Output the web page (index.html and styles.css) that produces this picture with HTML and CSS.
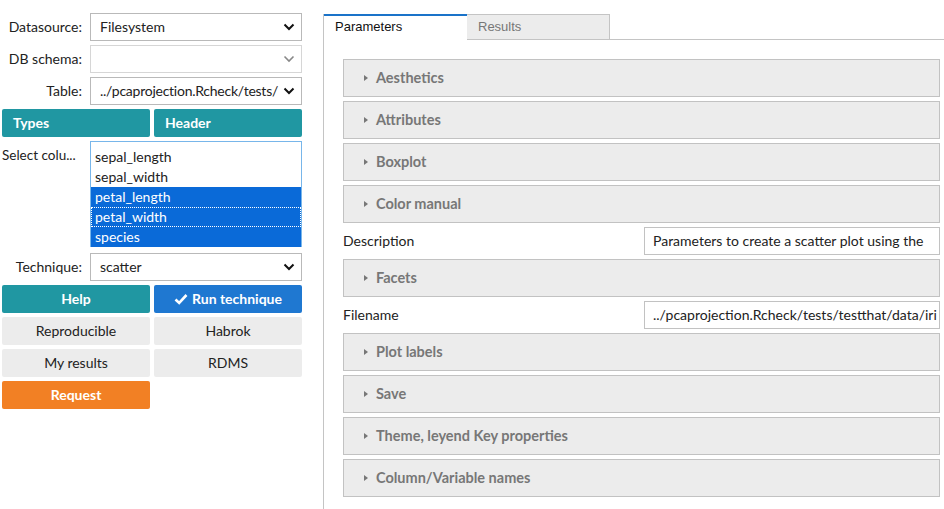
FILE: index.html
```html
<!DOCTYPE html>
<html>
<head>
<meta charset="utf-8">
<link rel="stylesheet" href="styles.css">
</head>
<body>
<div class="app">
  <div class="left">
    <div class="row">
      <label class="lbl">Datasource:</label>
      <div class="sel"><span class="val">Filesystem</span><svg class="chev" viewBox="0 0 12 8" width="12" height="8"><path d="M1.5 1.5 L6 6 L10.5 1.5" fill="none" stroke="#111" stroke-width="2"/></svg></div>
    </div>
    <div class="row">
      <label class="lbl">DB schema:</label>
      <div class="sel dis"><span class="val"></span><svg class="chev" viewBox="0 0 12 8" width="12" height="8"><path d="M1.5 1.5 L6 6 L10.5 1.5" fill="none" stroke="#888" stroke-width="1.6"/></svg></div>
    </div>
    <div class="row">
      <label class="lbl">Table:</label>
      <div class="sel"><span class="val tight">../pcaprojection.Rcheck/tests/</span><svg class="chev" viewBox="0 0 12 8" width="12" height="8"><path d="M1.5 1.5 L6 6 L10.5 1.5" fill="none" stroke="#111" stroke-width="2"/></svg></div>
    </div>
    <div class="btns">
      <div class="btn teal left-al">Types</div>
      <div class="btn teal left-al">Header</div>
    </div>
    <div class="row multi">
      <label class="lbl lbl-left">Select colu...</label>
      <div class="list">
        <div class="opt">sepal_length</div>
        <div class="opt">sepal_width</div>
        <div class="opt on">petal_length</div>
        <div class="opt on focus">petal_width</div>
        <div class="opt on">species</div>
      </div>
    </div>
    <div class="row tech">
      <label class="lbl">Technique:</label>
      <div class="sel"><span class="val">scatter</span><svg class="chev" viewBox="0 0 12 8" width="12" height="8"><path d="M1.5 1.5 L6 6 L10.5 1.5" fill="none" stroke="#111" stroke-width="2"/></svg></div>
    </div>
    <div class="btns">
      <div class="btn teal">Help</div>
      <div class="btn blue"><svg class="check" viewBox="0 0 14 12" width="14" height="12"><path d="M1.5 6.5 L5.2 10 L12.5 2" fill="none" stroke="#fff" stroke-width="2.6"/></svg>Run technique</div>
    </div>
    <div class="btns">
      <div class="btn gray">Reproducible</div>
      <div class="btn gray">Habrok</div>
    </div>
    <div class="btns">
      <div class="btn gray">My results</div>
      <div class="btn gray">RDMS</div>
    </div>
    <div class="btns">
      <div class="btn orange">Request</div>
    </div>
  </div>
  <div class="right">
    <div class="tabs">
      <div class="tab active">Parameters</div>
      <div class="tab">Results</div>
      <div class="tab-fill"></div>
    </div>
    <div class="content">
      <div class="panel"><span class="tri"></span>Aesthetics</div>
      <div class="panel"><span class="tri"></span>Attributes</div>
      <div class="panel"><span class="tri"></span>Boxplot</div>
      <div class="panel"><span class="tri"></span>Color manual</div>
      <div class="field">
        <span class="flabel">Description</span>
        <div class="input">Parameters to create a scatter plot using the</div>
      </div>
      <div class="panel"><span class="tri"></span>Facets</div>
      <div class="field">
        <span class="flabel">Filename</span>
        <div class="input">../pcaprojection.Rcheck/tests/testthat/data/iri</div>
      </div>
      <div class="panel"><span class="tri"></span>Plot labels</div>
      <div class="panel"><span class="tri"></span>Save</div>
      <div class="panel"><span class="tri"></span>Theme, leyend Key properties</div>
      <div class="panel"><span class="tri"></span>Column/Variable names</div>
    </div>
  </div>
</div>
</body>
</html>
```
FILE: styles.css
```css
* { box-sizing: border-box; }
html, body { margin: 0; padding: 0; background: #fff; }
body {
  font-family: "Lato", "Open Sans", sans-serif;
  font-size: 14px;
  color: #222;
  width: 944px;
  height: 509px;
  overflow: hidden;
}
.app { display: flex; height: 509px; }
.left {
  width: 323px;
  padding: 13px 0 0 2px;
  display: flex;
  flex-direction: column;
  gap: 4px;
}
.row {
  display: flex;
  align-items: center;
  height: 28px;
}
.lbl {
  width: 80px;
  text-align: right;
  margin-right: 8px;
  font-size: 14px;
  color: #222;
  padding-bottom: 1px;
}
.sel {
  width: 212px;
  height: 28px;
  border: 1px solid #b9b9b9;
  background: #fff;
  display: flex;
  align-items: center;
  padding: 0 6px 1px 9px;
  font-size: 14px;
}
.sel .val { flex: 1; white-space: nowrap; overflow: hidden; }
.sel .val.tight { letter-spacing: -0.25px; overflow: visible; }
.sel.dis { border-color: #d6d6d6; }
.chev { flex: none; margin-left: 1px; }
.btns { display: flex; gap: 4px; }
.btn {
  width: 148px;
  height: 28px;
  border-radius: 2px;
  display: flex;
  align-items: center;
  justify-content: center;
  font-size: 14px;
  padding-bottom: 1px;
}
.btn.left-al { justify-content: flex-start; padding-left: 11px; }
.teal { background: #2097a2; color: #fff; font-weight: 700; }
.blue { background: #1f78d1; color: #fff; font-weight: 700; }
.gray { background: #ececec; color: #222; }
.orange { background: #f28024; color: #fff; font-weight: 700; }
.check { margin-right: 4px; }
.row.multi { height: 106px; align-items: flex-start; }
.lbl-left { text-align: left; margin-right: 8px; padding-top: 6px; white-space: nowrap; font-size: 13.5px; }
.list {
  width: 212px;
  height: 106px;
  border: 1px solid #78b6ea;
  padding-top: 5px;
  background: #fff;
}
.opt {
  height: 20px;
  line-height: 20px;
  padding-left: 4px;
  font-size: 14px;
  color: #222;
}
.opt.on { background: #0a6ad8; color: #fff; }
.opt.focus { outline: 1px dotted #fff; outline-offset: -1px; }
.row.tech { margin-top: 2px; }

.right {
  flex: 1;
  border-left: 1px solid #c4c4c4;
  margin-top: 14px;
  display: flex;
  flex-direction: column;
}
.tabs { display: flex; height: 26px; }
.tab {
  width: 143px;
  height: 26px;
  padding: 4px 0 0 11px;
  font-family: "Liberation Sans", Arial, sans-serif;
  font-size: 13px;
  color: #777;
  background: #ececec;
  border: 1px solid #c4c4c4;
  border-left: none;
}
.tab.active {
  background: #fff;
  color: #111;
  border: none;
  border-top: 2px solid #1a73c9;
  padding-top: 3px;
}
.tab-fill { flex: 1; border-bottom: 1px solid #c4c4c4; }
.content {
  padding: 19px 4px 0 19px;
  display: flex;
  flex-direction: column;
  gap: 4px;
}
.panel {
  height: 38px;
  background: #ececec;
  border: 1px solid #c2c2c2;
  display: flex;
  align-items: center;
  padding-left: 20px;
  padding-bottom: 1px;
  font-size: 14.5px;
  font-weight: 700;
  color: #777;
}
.tri {
  width: 0; height: 0;
  border-left: 4px solid #777;
  border-top: 3.5px solid transparent;
  border-bottom: 3.5px solid transparent;
  margin-right: 8px;
}
.field {
  display: flex;
  align-items: center;
  justify-content: space-between;
  height: 28px;
}
.flabel { font-size: 14px; color: #222; padding-bottom: 1px; }
.input {
  width: 296px;
  height: 28px;
  border: 1px solid #c2c2c2;
  padding: 0 8px 1px;
  display: flex;
  align-items: center;
  white-space: nowrap;
  overflow: hidden;
  font-size: 14px;
  color: #222;
}
```
